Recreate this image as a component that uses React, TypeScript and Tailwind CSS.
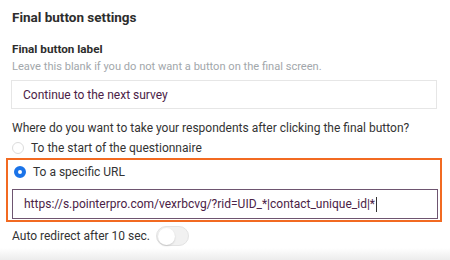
export default function App() {
  return (
    <div className="w-[450px] h-[260px] overflow-hidden bg-white text-[#333] font-['Roboto',sans-serif] relative">
      <div className="pl-[12px] pr-[13px] pt-[7px]">
        <h2 className="text-[13.5px] leading-[20px] font-bold text-[#2d2d2d]">Final button settings</h2>

        <h3 className="mt-[12px] text-[11.7px] leading-[20px] font-bold text-[#2d2d2d]">Final button label</h3>
        <p className="text-[11.1px] leading-[16px] text-[#a2a7ab]">Leave this blank if you do not want a button on the final screen.</p>

        <div className="mt-[5px] -ml-px h-[29px] w-[426px] border border-[#e6e6e6] flex items-center pl-[11px] text-[12px] text-[#4b2246]">
          Continue to the next survey
        </div>

        <p className="mt-[10px] text-[12px] leading-[18px] text-[#333]">Where do you want to take your respondents after clicking the final button?</p>

        <div className="mt-[2px] flex items-center gap-[7px] h-[18px]">
          <span className="w-[12px] h-[12px] rounded-full border border-[#dcdcdc] bg-white" />
          <span className="text-[12px] text-[#333]">To the start of the questionnaire</span>
        </div>
      </div>

      <div className="mx-[6px] mt-[1px] w-[436px] border-2 border-[#f26a21] pt-[3px] pb-[1px] pl-[4px]">
        <div className="flex items-center gap-[7px] h-[18px] pl-[2px]">
          <span className="w-[12px] h-[12px] rounded-full border-[4px] border-[#1a73e8] bg-white" />
          <span className="text-[12px] text-[#333]">To a specific URL</span>
        </div>
        <div className="mt-[8px] h-[30px] w-[426px] border border-[#6e5570] flex items-center pl-[11px] text-[12px] text-[#4b2246]">
          https://s.pointerpro.com/vexrbcvg/?rid=UID_*|contact_unique_id|*
          <span className="w-px h-[15px] bg-[#333] ml-px" />
        </div>
      </div>

      <div className="pl-[12px] mt-[4px] flex items-center gap-[6px]">
        <span className="text-[12px] text-[#333]">Auto redirect after 10 sec.</span>
        <span className="w-[33px] h-[20px] rounded-full bg-[#f1f1f1] border border-[#e3e3e3] flex items-center px-px">
          <span className="w-[17px] h-[17px] rounded-full bg-white shadow-[0_1px_2px_rgba(0,0,0,0.15)]" />
        </span>
      </div>

      <div className="absolute left-0 right-0 bottom-0 h-[12px] bg-gradient-to-b from-transparent to-[#ececec]" />
    </div>
  );
}
